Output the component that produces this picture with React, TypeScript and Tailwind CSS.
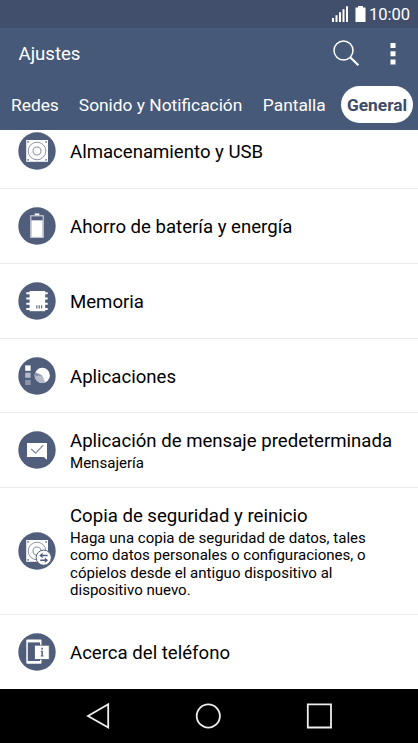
import type { ReactNode } from "react";
import clsx from "clsx";

interface SettingItem {
  id: string;
  title: string;
  summary?: string;
  icon: ReactNode;
  className: string;
}

const DARK = "#515e7b";

const DiskShape = () => (
  <>
    <rect x="8.2" y="8" width="21.8" height="21.8" fill="#fff" />
    <circle cx="19" cy="19" r="8.8" fill="none" stroke="#8c95aa" strokeWidth="1" />
    <circle cx="19" cy="19" r="4" fill="none" stroke="#8c95aa" strokeWidth="1.1" />
    <path d="M9.2 9h1.8v1.8H9.2zM27.2 9H29v1.8h-1.8zM9.2 27H11v1.8H9.2zM27.2 27H29v1.8h-1.8z" fill="#8c95aa" />
  </>
);

const BatteryShape = () => (
  <>
    <rect x="16.7" y="6.4" width="4.6" height="2.2" fill="#fff" />
    <rect x="12.8" y="8.8" width="12.4" height="21.5" fill={DARK} stroke="#d5d9e1" strokeWidth="1.1" />
    <rect x="13.4" y="13.3" width="11.2" height="16.6" fill="#fff" />
  </>
);

const MemoryShape = () => (
  <>
    <path
      d="M8.3 10.2h21.4v2H8.3zM8.3 15.5h21.4v2H8.3zM8.3 20.8h21.4v2H8.3zM8.3 26h21.4v2H8.3z"
      fill="#fff"
    />
    <rect x="11.6" y="9" width="15.6" height="20.2" fill="#fff" />
    <path d="M18.3 23.2h1.1v3.2h-1.1zM20.7 23.2h1.1v3.2h-1.1zM23.1 23.2h1.1v3.2h-1.1z" fill={DARK} />
  </>
);

const AppsShape = () => (
  <>
    <rect x="7.2" y="8.4" width="5.4" height="5.4" fill="#fff" />
    <rect x="7.2" y="15.7" width="5.4" height="5.1" fill="#b4bac8" />
    <rect x="7.2" y="22.9" width="5.4" height="5.1" fill="#8c95aa" />
    <circle cx="24.3" cy="18.4" r="7.6" fill="#fff" />
    <path d="M24.3 18.4 17.4 15.2A7.6 7.6 0 0 0 27.2 25.4Z" fill="#b4bac8" />
    <path d="M24.3 18.4 17.4 15.2A7.6 7.6 0 0 0 16.8 19.2Z" fill="#8c95aa" />
  </>
);

const MessageShape = () => (
  <>
    <path d="M9 12h20v16.8L25.6 26H9z" fill="#fff" />
    <path d="m13.2 18 4.5 4.2 7.6-8" fill="none" stroke="#79849b" strokeWidth="1.1" />
  </>
);

const BackupShape = () => (
  <>
    <DiskShape />
    <circle cx="25.7" cy="25.7" r="7.6" fill="#fff" stroke={DARK} strokeWidth="1" />
    <path
      d="M24.6 24.2h5v-1.4h-5v-2.1L21.3 23.5l3.3 2.8zM26.8 27.4v-1.9l3.3 2.7-3.3 2.7v-1.9h-4.6v-1.6z"
      fill={DARK}
    />
  </>
);

const PhoneInfoShape = () => (
  <>
    <rect x="8.3" y="6.4" width="15.2" height="24.4" rx="1" fill="#fff" />
    <rect x="9.8" y="9.4" width="12.2" height="18.6" fill={DARK} />
    <rect x="16.6" y="12.2" width="14.6" height="14.2" fill="#fff" stroke={DARK} strokeWidth="0.8" />
    <path d="M23.3 14.8h1.6v1.6h-1.6zM22.8 17.7h2.1v4.8h.6v1h-2.7v-1h.6v-3.8h-.6z" fill={DARK} />
  </>
);

const tabs = [
  { label: "Redes", className: "ml-[11px]" },
  { label: "Sonido y Notificación", className: "ml-5" },
  { label: "Pantalla", className: "ml-[20.5px]" },
];

const items: SettingItem[] = [
  { id: "storage", title: "Almacenamiento y USB", icon: <DiskShape />, className: "-mt-4 h-[75px]" },
  { id: "battery", title: "Ahorro de batería y energía", icon: <BatteryShape />, className: "h-[75px]" },
  { id: "memory", title: "Memoria", icon: <MemoryShape />, className: "h-[75px]" },
  { id: "apps", title: "Aplicaciones", icon: <AppsShape />, className: "h-[74px]" },
  {
    id: "message",
    title: "Aplicación de mensaje predeterminada",
    summary: "Mensajería",
    icon: <MessageShape />,
    className: "h-[75px]",
  },
  {
    id: "backup",
    title: "Copia de seguridad y reinicio",
    summary:
      "Haga una copia de seguridad de datos, tales como datos personales o configuraciones, o cópielos desde el antiguo dispositivo al dispositivo nuevo.",
    icon: <BackupShape />,
    className: "h-[127px]",
  },
  { id: "about", title: "Acerca del teléfono", icon: <PhoneInfoShape />, className: "h-[75px]" },
];

const StatusBar = () => (
  <div className="flex h-7 items-center justify-end bg-[#414f6d] pr-2 text-white">
    <svg width="36" height="18" viewBox="0 0 36 18">
      <path
        d="M2 13h2v4H2zM5.5 10.3h2V17h-2zM9 7.3h2V17H9zM12.5 4.3h2V17h-2zM16 1.2h2V17h-2z"
        fill="currentColor"
      />
      <path d="M28 1h5v1.5h2.5V17h-10V2.5H28z" fill="currentColor" />
    </svg>
    <span className="ml-[3px] pt-px text-[16.5px] leading-[27px]">10:00</span>
  </div>
);

const SettingRow = ({ item }: { item: SettingItem }) => (
  <li className={clsx("flex shrink-0 items-center border-b border-[#ebebeb] pl-[18px]", item.className)}>
    <svg width="38" height="38" viewBox="0 0 38 38" className="shrink-0">
      <circle cx="19" cy="19" r="18.7" fill={DARK} />
      {item.icon}
    </svg>
    <div className={clsx("ml-[14px] w-[330px]", !item.summary && "pt-[2px]")}>
      <h2 className="text-[18.6px] leading-[26px] whitespace-nowrap">{item.title}</h2>
      {item.summary && <p className="w-[305px] pt-px text-[15.05px] leading-[17.5px]">{item.summary}</p>}
    </div>
  </li>
);

export default function App() {
  return (
    <div className="flex h-[743px] w-[418px] flex-col overflow-hidden bg-white font-['Roboto',sans-serif] text-black">
      <header className="z-10 h-[130px] shrink-0 bg-[#465978] text-white">
        <StatusBar />
        <div className="flex h-[52px] items-center pl-[18.5px]">
          <h1 className="flex-1 pt-px text-[18.6px]">Ajustes</h1>
          <svg width="28" height="28" viewBox="0 0 28 28" fill="none" stroke="currentColor" className="mr-[29.5px] -mt-[3px]">
            <circle cx="11.5" cy="11.5" r="9.5" strokeWidth="1.5" />
            <path d="m18.2 18.2 8.2 8" strokeWidth="2.2" />
          </svg>
          <svg width="6" height="22" viewBox="0 0 6 22" fill="currentColor" className="mr-[22.5px]">
            <path d="M.5 0h5v5h-5zM.5 8.3h5v5h-5zM.5 16.5h5v5h-5z" />
          </svg>
        </div>
        <nav className="flex h-[49px] items-center text-[17.35px] whitespace-nowrap">
          {tabs.map((tab) => (
            <span key={tab.label} className={clsx("pt-[2px]", tab.className)}>
              {tab.label}
            </span>
          ))}
          <span className="mr-[5px] ml-auto flex h-[37px] w-[72px] items-center justify-center rounded-full bg-white pt-[2px] font-bold text-[#3d4a68]">
            General
          </span>
        </nav>
      </header>

      <ul className="flex h-[559px] shrink-0 flex-col overflow-hidden">
        {items.map((item) => (
          <SettingRow key={item.id} item={item} />
        ))}
      </ul>

      <footer className="flex h-[54px] shrink-0 items-center bg-black pl-[86px] text-[#eeeeee]">
        <svg width="246" height="28" viewBox="0 0 246 28" fill="none" stroke="currentColor" strokeWidth="1.8">
          <path d="M22.2 2.3v23.2L2 14z" />
          <circle cx="122.3" cy="14" r="11.6" />
          <path d="M221.8 2.3h23.2v23.2h-23.2z" />
        </svg>
      </footer>
    </div>
  );
}
